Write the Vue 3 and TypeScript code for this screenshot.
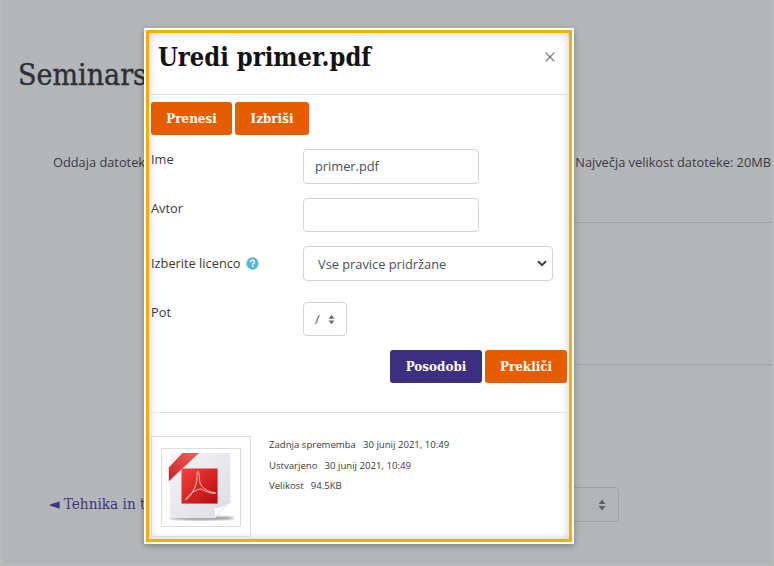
<script setup lang="ts">
const info = [
  { label: 'Zadnja sprememba', value: '30 junij 2021, 10:49' },
  { label: 'Ustvarjeno', value: '30 junij 2021, 10:49' },
  { label: 'Velikost', value: '94.5KB' },
]
</script>

<template>
  <div class="page">
    <h1 class="page-title">Seminarska naloga</h1>
    <div class="submission">
      <span>Oddaja datotek</span>
      <span>Največja velikost datoteke: 20MB</span>
    </div>
    <hr class="rule rule-a" />
    <hr class="rule rule-b" />
    <div class="nav">
      <a class="prev">◄ Tehnika in tehnologija</a>
      <div class="jump"><svg class="updown" viewBox="0 0 8 12" width="8" height="12"><path d="M4 0.5 7.500 5H0.500ZM4 11.500 0.500 7H7.500Z" fill="#5f6468" /></svg></div>
    </div>

    <section class="modal">
      <div class="inner">
        <header class="head">
          <h2>Uredi primer.pdf</h2>
          <svg class="close" viewBox="0 0 10 10" width="10" height="10"><path d="M.7.7 9.3 9.3M9.3.7.7 9.3" stroke="#6a6e72" stroke-width="1.2" fill="none" /></svg>
        </header>
        <div class="body">
          <div class="actions">
            <button class="btn orange b1">Prenesi</button>
            <button class="btn orange b2">Izbriši</button>
          </div>
          <div class="field f-name">
            <label>Ime</label>
            <div class="control w176">primer.pdf</div>
          </div>
          <div class="field f-author">
            <label>Avtor</label>
            <div class="control w176"></div>
          </div>
          <div class="field f-licence">
            <label>Izberite licenco
              <svg class="help" viewBox="0 0 14 14" width="13" height="13"><circle cx="7" cy="7" r="6.6" fill="#55b7dc" /><path d="M4.9 5.4C5 4.2 5.900 3.600 7 3.600c1.200 0 2.100.7 2.100 1.700 0 1.600-2 1.500-2 3" fill="none" stroke="#fff" stroke-width="1.6" /><rect x="6.2" y="9.1" width="1.8" height="1.7" fill="#fff" /></svg>
            </label>
            <div class="control select w250"><span class="sel-text">Vse pravice pridržane</span>
              <svg class="chev" viewBox="0 0 10 7" width="10" height="7"><path d="M1 1.2 5 5.2l4-4" fill="none" stroke="#3c4248" stroke-width="2" /></svg>
            </div>
          </div>
          <div class="field f-path">
            <label>Pot</label>
            <div class="control path">/
              <svg class="updown" viewBox="0 0 8 12" width="7" height="11"><path d="M4 .5 7.500 5H.500ZM4 11.500.500 7H7.500Z" fill="#6a6e73" /></svg>
            </div>
          </div>
          <div class="submit">
            <button class="btn purple b3">Posodobi</button>
            <button class="btn orange b4">Prekliči</button>
          </div>
        </div>
        <footer class="foot">
          <div class="thumb">
            <div class="thumb-in">
              <svg viewBox="0 0 80 79" width="78" height="77">
                <defs>
                  <linearGradient id="paper" x1="0" y1="0" x2="1" y2="1"><stop offset="0" stop-color="#f4f4f7" /><stop offset="1" stop-color="#dcdde4" /></linearGradient>
                  <linearGradient id="red" x1="0" y1="0" x2="1" y2="1"><stop offset="0" stop-color="#f5443a" /><stop offset="1" stop-color="#b50812" /></linearGradient>
                  <linearGradient id="band" x1="0" y1="1" x2="1" y2="0"><stop offset="0" stop-color="#c0262a" /><stop offset="1" stop-color="#f4605a" /></linearGradient>
                  <filter id="soft"><feGaussianBlur stdDeviation="1.2" /></filter>
                </defs>
                <ellipse cx="41" cy="71" rx="33" ry="2" fill="#8f8f8f" filter="url(#soft)" />
                <path d="M10 4H68Q70 4 70 6V54L54 71H10Q8 71 8 69V6Q8 4 10 4Z" fill="url(#paper)" />
                <path d="M70 54 54 71 53 60Q60 61 70 54Z" fill="#fbfbfb" stroke="#cfd0d6" stroke-width=".6" />
                <path d="M21 4H38L7 33V19Z" fill="url(#band)" />
                <rect x="20" y="20" width="37" height="36" fill="url(#red)" />
                <path d="M24 52C29 50 36 38 36 29 36 25 35.500 24 37 23 39 25 38 31 39 35 41 40 47 44 55 45 52 47 44 43 40 41 35 41 27 47 24 52Z" fill="none" stroke="#f7d0ca" stroke-width=".9" />
              </svg>
            </div>
          </div>
          <dl class="meta">
            <div v-for="row in info" :key="row.label" class="meta-row">
              <dt>{{ row.label }}</dt>
              <dd>{{ row.value }}</dd>
            </div>
          </dl>
        </footer>
      </div>
    </section>
  </div>
</template>

<style>
html, body { margin: 0; }
</style>

<style scoped>
* { box-sizing: border-box; }
.page {
  position: relative;
  width: 774px;
  height: 566px;
  overflow: hidden;
  background: #b3b6b9;
  box-shadow: inset 2px 0 #b9baba, inset -2px 0 #b9baba, inset 0 -2px #b9baba;
  font-family: "Open Sans", "Noto Sans", sans-serif;
  color: #373a3c;
}
.page-title {
  margin: 0;
  padding: 55px 0 0 18px;
  font: 400 30px/40px "DejaVu Serif Condensed", "DejaVu Serif", serif;
  -webkit-text-stroke: 0.4px #2d3034;
  color: #2d3034;
}
.submission {
  display: flex;
  justify-content: space-between;
  padding: 57px 3px 0 53px;
  font-size: 12.8px;
  line-height: 20px;
  color: #3b3a42;
}
.rule {
  margin: 0 2px 0 575px;
  border: 0;
  border-top: 1px solid #9c9fa2;
}
.rule-a { margin-top: 50px; }
.rule-b { margin-top: 141px; }
.nav {
  display: flex;
  justify-content: space-between;
  align-items: center;
  margin-top: 122px;
  padding-left: 49px;
  padding-right: 155px;
}
.prev {
  margin-bottom: 2px;
  font: 400 15.2px/20px "DejaVu Serif Condensed", "Liberation Serif", serif;
  color: #3d3580;
}
.jump {
  width: 150px;
  height: 35px;
  display: flex;
  align-items: center;
  justify-content: flex-end;
  padding-right: 12px;
  border: 1px solid #9c9fa3;
  border-radius: 4px;
}
.modal {
  position: absolute;
  left: 144px;
  top: 28px;
  width: 430px;
  height: 516px;
  padding: 2px;
  background: #fff;
  box-shadow: 0 2px 6px rgba(0, 0, 0, 0.3);
}
.inner {
  height: 100%;
  border: 3px solid #f9ad05;
  box-shadow: inset 0 0 8px rgba(0, 0, 0, 0.22);
  display: flex;
  flex-direction: column;
}
.head {
  height: 62px;
  flex: none;
  display: flex;
  align-items: center;
  justify-content: space-between;
  padding: 0 14px 13px 9px;
  border-bottom: 1px solid #dddfe0;
}
.head h2 {
  margin: 0;
  font: 700 25.3px/30px "DejaVu Serif Condensed", "DejaVu Serif", serif;
  color: #111315;
}
.body {
  flex: none;
  height: 318px;
  padding: 7px 2px 0 2px;
  border-bottom: 1px solid #e2e3e4;
  position: relative;
}
.actions { display: flex; gap: 3px; }
.btn {
  height: 33px;
  padding: 0;
  border: 0;
  border-radius: 3px;
  color: #fff;
  font: 700 13.3px/33px "DejaVu Serif Condensed", "DejaVu Serif", serif;
}
.orange { background: #e65c00; }
.purple { background: #3c2f7f; }
.b1 { width: 81px; }
.b2 { width: 74px; }
.b3 { width: 92px; }
.b4 { width: 82px; }
.field {
  display: grid;
  grid-template-columns: 152px auto;
  justify-content: start;
  font-size: 12.8px;
  color: #373a3c;
}
.field label { line-height: 20px; }
.f-name { margin-top: 14px; }
.f-author { margin-top: 14px; }
.f-licence { margin-top: 14px; align-items: center; }
.f-licence label { padding-bottom: 2px; }
.sel-text { padding-top: 2px; }
.f-path { margin-top: 21px; }
.help { vertical-align: -2px; margin-left: 2px; }
.control {
  height: 35px;
  border: 1px solid #ced4da;
  border-radius: 4px;
  background: #fff;
  color: #495057;
  font-size: 12.8px;
  line-height: 33px;
  padding-left: 11px;
  display: flex;
  align-items: center;
  justify-content: space-between;
}
.f-author .control { height: 34px; }
.w176 { width: 176px; }
.w250 { width: 250px; padding-left: 14px; padding-right: 5px; }
.path { width: 44px; height: 34px; padding: 0 11px; }
.submit {
  display: flex;
  justify-content: flex-end;
  gap: 3px;
  margin-top: 14px;
}
.foot {
  display: flex;
  padding: 23px 0 0 2px;
}
.thumb {
  width: 100px;
  height: 101px;
  border: 1px solid #dcdcdc;
  padding: 11px 9px 9px;
}
.thumb-in {
  width: 80px;
  height: 79px;
  border: 1px solid #dcdcdc;
  overflow: hidden;
}
.thumb-in svg { display: block; }
.meta {
  margin: -2px 0 0 18px;
  font-size: 9.6px;
  color: #373a3c;
}
.meta-row { display: flex; gap: 7px; height: 20px; align-items: center; }
.meta-row:first-child { height: 21px; }
dt, dd { margin: 0; }
</style>
